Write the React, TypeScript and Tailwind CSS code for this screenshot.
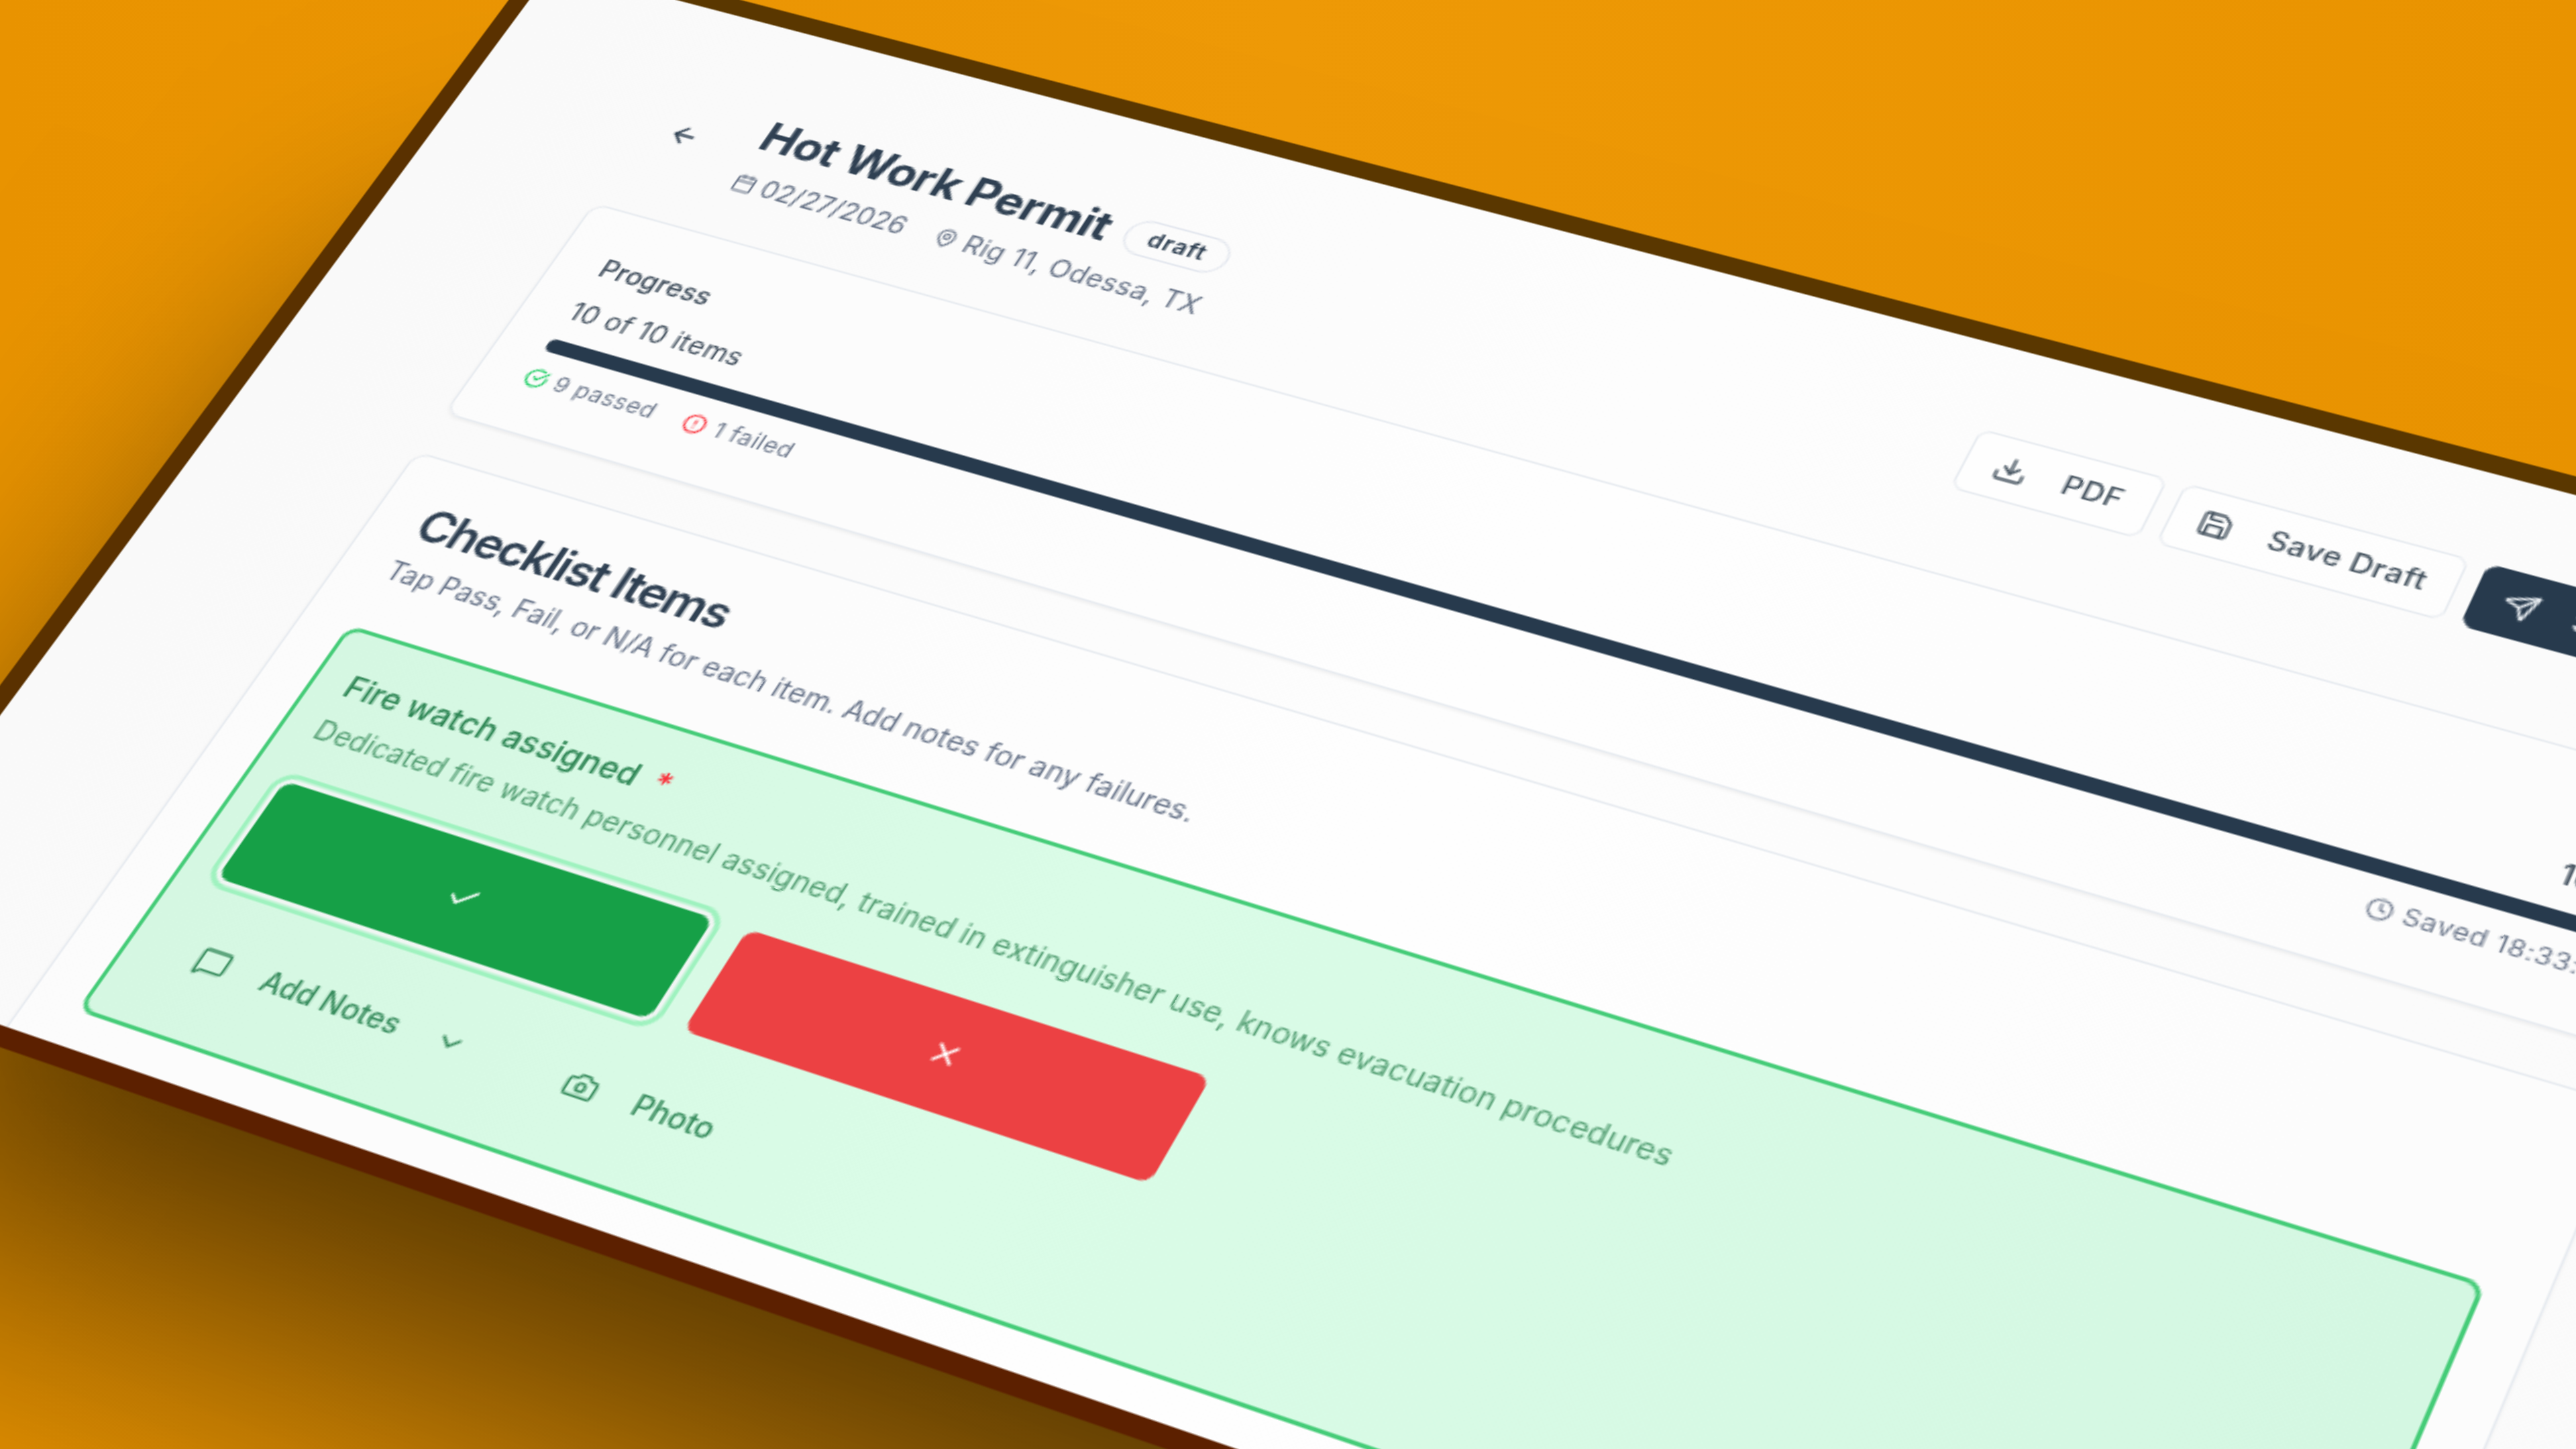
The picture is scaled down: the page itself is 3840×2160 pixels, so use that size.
import type { ReactNode } from "react";
import {
  ArrowLeft,
  Calendar,
  Camera,
  Check,
  ChevronDown,
  CircleAlert,
  CircleCheckBig,
  Clock,
  Download,
  MapPin,
  MessageSquare,
  Save,
  Send,
  X,
} from "lucide-react";

type IButton = {
  icon: ReactNode;
  label: string;
  className: string;
};

const HeaderButton = ({ icon, label, className }: IButton) => {
  return (
    <button
      className={`flex h-9 items-center gap-4 rounded-md border text-sm font-medium tracking-[0.018em] whitespace-nowrap ${className}`}
    >
      {icon}
      {label}
    </button>
  );
};

const Header = () => {
  return (
    <div className="flex items-start justify-between">
      <div className="flex items-center gap-[17.5px]">
        <button className="flex h-10 w-10 items-center justify-center">
          <ArrowLeft className="h-4 w-4" />
        </button>
        <div>
          <div className="flex items-center gap-[9px]">
            <h1 className="text-2xl font-bold tracking-[-0.012em]">Hot Work Permit</h1>
            <span className="rounded-full border border-[#e2e6ee] px-[11px] py-0.5 text-xs font-semibold tracking-[0.04em]">
              draft
            </span>
          </div>
          <div className="mt-1 flex items-center gap-4 text-sm text-[#667286]">
            <span className="flex items-center gap-1">
              <Calendar className="h-3 w-3" />
              02/27/2026
            </span>
            <span className="flex items-center gap-1 tracking-[0.013em]">
              <MapPin className="h-3 w-3" />
              Rig 11, Odessa, TX
            </span>
          </div>
        </div>
      </div>
      <div className="-mt-0.5 flex gap-2 text-[#45535f]">
        <HeaderButton
          icon={<Download className="h-4 w-4" />}
          label="PDF"
          className="border-[#e7ebf0] bg-white/60 pr-3.5 pl-[13px]"
        />
        <HeaderButton icon={<Save className="h-4 w-4" />} label="Save Draft" className="border-[#e7ebf0] bg-white/60 px-3" />
        <HeaderButton
          icon={<Send className="h-4 w-4" />}
          label="Submit Permit"
          className="w-[147.5px] border-[#273a4d] bg-[#273a4d] pl-3 text-[#e4e9ee]"
        />
      </div>
    </div>
  );
};

const ProgressCard = () => {
  return (
    <div className="flex flex-col gap-2 rounded-lg border border-[#e7ebf0] bg-white/40 p-6 text-[#3f4d5b] shadow-xs">
      <h3 className="text-sm font-medium">Progress</h3>
      <div className="flex justify-between text-sm tracking-[0.016em]">
        <span>10 of 10 items</span>
        <span className="font-medium">100%</span>
      </div>
      <div className="h-2 rounded-full bg-[#273a4d]" />
      <div className="flex justify-between text-xs tracking-[0.025em] text-[#6f7a8d]">
        <div className="flex gap-4">
          <span className="flex items-center gap-1">
            <CircleCheckBig className="h-3 w-3 text-green-500" />9 passed
          </span>
          <span className="flex items-center gap-1">
            <CircleAlert className="h-3 w-3 text-red-500" />1 failed
          </span>
        </div>
        <span className="flex items-center gap-1">
          <Clock className="h-3 w-3" />
          Saved 18:33:48
        </span>
      </div>
    </div>
  );
};

const ChecklistItem = () => {
  return (
    <div className="rounded-lg border-2 border-[#45cc78] bg-linear-to-r from-[#d5f7e2] via-[#dafce7] via-40% to-[#d4f7e2] p-4 pb-3.5 text-[#2c8553]">
      <h4 className="font-medium">
        Fire watch assigned <span className="ml-1 text-red-500">*</span>
      </h4>
      <p className="mt-1 text-sm tracking-[0.003em] text-[#56a075]">
        Dedicated fire watch personnel assigned, trained in extinguisher use, knows evacuation procedures
      </p>
      <div className="mt-5 flex gap-[17px] pl-0.5">
        <button className="flex h-14 w-[222px] items-center justify-center rounded-md bg-[#16a047] text-white ring-[2.5px] ring-[#9ff2bf] ring-offset-[2.5px] ring-offset-[#f0f6f3]">
          <Check className="h-4 w-4" />
        </button>
        <button className="flex h-14 w-[225px] items-center justify-center rounded-md bg-[#ec4143] text-white">
          <X className="h-4 w-4" />
        </button>
      </div>
      <div className="mt-[15px] mb-px flex gap-4.5 pl-0.5 text-sm font-medium text-[#378c5d]">
        <button className="flex h-[50px] items-center gap-[18px] px-4">
          <MessageSquare className="h-4 w-4" />
          Add Notes
          <ChevronDown className="h-4 w-4" />
        </button>
        <button className="flex h-[50px] items-center gap-[18px] px-4">
          <Camera className="h-4 w-4" />
          Photo
        </button>
      </div>
    </div>
  );
};

const ChecklistCard = () => {
  return (
    <div className="h-[600px] rounded-lg border border-[#e7ebf0] bg-white/40 p-6 shadow-xs">
      <h2 className="text-2xl leading-none font-semibold tracking-[-0.041em]">Checklist Items</h2>
      <p className="mt-1.5 mb-6 text-sm tracking-[0.001em] text-[#69758a]">
        Tap Pass, Fail, or N/A for each item. Add notes for any failures.
      </p>
      <ChecklistItem />
    </div>
  );
};

// The screen lies on a tilted plane: the matrix maps the checklist card's
// top left corner, the translate moves the screen's own origin there.
export default function App() {
  return (
    <div className="relative h-[2160px] w-[3840px] overflow-hidden bg-linear-to-r from-[#e99300] via-[#ee9906] to-[#e99300] font-['Inter',sans-serif]">
      <div className="absolute top-0 left-0 origin-top-left [transform:matrix3d(2.6369,0.71929,0,-0.0001213,-1.7966,2.2298,0,-0.0001867,0,0,1,0,622,671.5,0,1)_translate(-111px,-301.5px)]">
        <div className="h-[653px] w-[1290px] overflow-hidden border-[10px] border-t-[#5a3700] border-r-[#5a3700] border-b-[#5c2000] border-l-[#5a3100] bg-linear-to-r from-[#f9f9f9] via-[#fdfdfd] to-[#fafafa] px-[101px] pt-[49.5px] text-[#2f4052] shadow-[0_130px_150px_-50px_rgba(0,0,0,0.66)]">
          <div className="flex w-[1060px] flex-col gap-6">
            <Header />
            <ProgressCard />
            <ChecklistCard />
          </div>
        </div>
      </div>
    </div>
  );
}
